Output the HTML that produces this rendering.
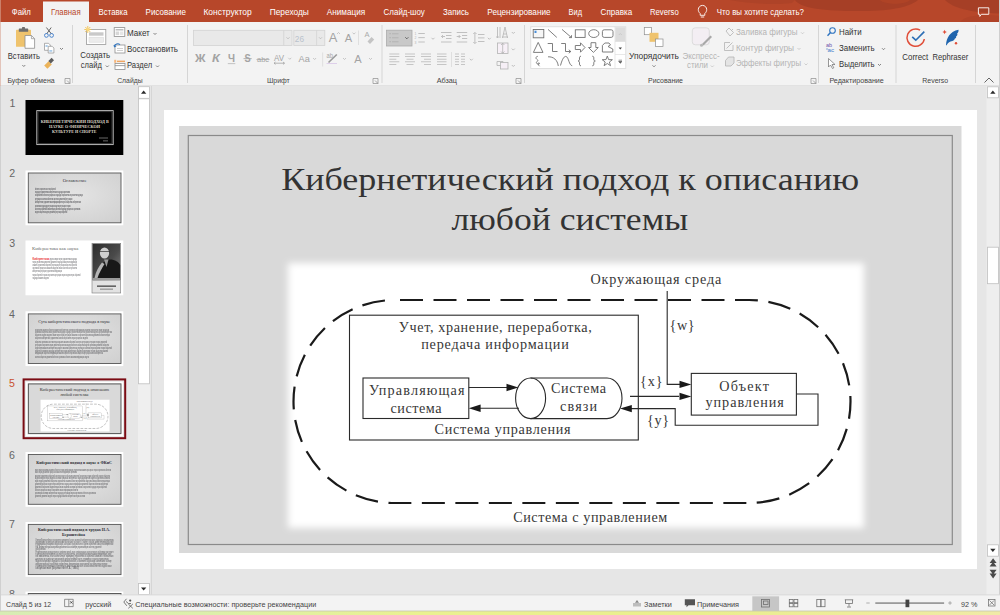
<!DOCTYPE html>
<html><head><meta charset="utf-8">
<style>
*{margin:0;padding:0;box-sizing:border-box}
html,body{width:1000px;height:615px;overflow:hidden;background:#e6e6e6;font-family:"Liberation Sans",sans-serif}
.a{position:absolute}
#tabs{left:0;top:0;width:1000px;height:22px;background:#b7472a}
.tab{position:absolute;top:6px;font-size:8px;color:#fff;white-space:nowrap;line-height:10px}
#acttab{left:43px;top:1px;width:46px;height:21px;background:#f3f3f3}
#ribbon{left:0;top:22px;width:1000px;height:63px;background:#f3f3f3;border-bottom:1px solid #e1e1e1}
.sep{position:absolute;width:1px;background:#d6d6d6}
.lbl{position:absolute;font-size:7.3px;color:#444;white-space:nowrap;line-height:9px}
#left{left:0;top:86px;width:151px;height:510px;background:#e6e6e6}
#divider{left:151px;top:86px;width:1px;height:510px;background:#d4d4d4}
#status{left:0;top:596px;width:1000px;height:15px;background:#f3f3f3;border-top:1px solid #e1e1e1}
#strip{left:0;top:611px;width:1000px;height:4px;background:linear-gradient(90deg,#dcefb0,#e6eead 50%,#f1eaa6)}
.st{position:absolute;top:3px;font-size:7.2px;color:#444;white-space:nowrap;line-height:9px}
</style></head><body>
<!-- RIBBON SVG -->
<svg class="a" style="left:0;top:0" width="1000" height="86" viewBox="0 0 1000 86" font-family="Liberation Sans">
<defs>
<linearGradient id="tabg" x1="0" x2="1"><stop offset="0" stop-color="#b7472a"/><stop offset="1" stop-color="#b44327"/></linearGradient>
</defs>
<rect x="0" y="0" width="1000" height="22" fill="#b7472a"/>
<g fill="#a63f26">
<path d="M795,0 C800,9 830,11.5 868,11 C898,10.5 912,5 918,0 Z"/>
<path d="M945,0 C950,5 962,12.5 1000,13.5 V0 Z"/>
<path d="M730,0 C750,4 775,5 792,3 L795,0 Z" opacity="0.5"/>
<path d="M960,22 C965,15 985,14 1000,16 V22 Z" opacity="0.4"/>
</g>
<path d="M880,0 C885,5 905,5 910,0 Z" fill="#b14527" opacity="0.8"/>
<rect x="0" y="22" width="1000" height="63" fill="#f3f3f3"/>
<rect x="0" y="85" width="1000" height="1" fill="#e2e2e2"/>
<rect x="43" y="1.5" width="46" height="21" fill="#f3f3f3"/>
<rect x="0" y="0" width="1" height="86" fill="#d9a595" opacity="0.6"/>
<g font-size="8.3" fill="#fff">
<text x="11.8" y="14.7" textLength="19" lengthAdjust="spacingAndGlyphs">Файл</text>
<text x="51" y="14.7" textLength="29.6" lengthAdjust="spacingAndGlyphs" fill="#b7472a">Главная</text>
<text x="98.6" y="14.7" textLength="28.9" lengthAdjust="spacingAndGlyphs">Вставка</text>
<text x="145.6" y="14.7" textLength="40.4" lengthAdjust="spacingAndGlyphs">Рисование</text>
<text x="203.4" y="14.7" textLength="48.3" lengthAdjust="spacingAndGlyphs">Конструктор</text>
<text x="269.7" y="14.7" textLength="39.1" lengthAdjust="spacingAndGlyphs">Переходы</text>
<text x="326.8" y="14.7" textLength="38.4" lengthAdjust="spacingAndGlyphs">Анимация</text>
<text x="383.6" y="14.7" textLength="41.2" lengthAdjust="spacingAndGlyphs">Слайд-шоу</text>
<text x="443" y="14.7" textLength="26" lengthAdjust="spacingAndGlyphs">Запись</text>
<text x="487.3" y="14.7" textLength="63.3" lengthAdjust="spacingAndGlyphs">Рецензирование</text>
<text x="568.6" y="14.7" textLength="13.4" lengthAdjust="spacingAndGlyphs">Вид</text>
<text x="600.6" y="14.7" textLength="31.6" lengthAdjust="spacingAndGlyphs">Справка</text>
<text x="650" y="14.7" textLength="28.7" lengthAdjust="spacingAndGlyphs">Reverso</text>
<text x="716.8" y="14.7" textLength="87.1" lengthAdjust="spacingAndGlyphs">Что вы хотите сделать?</text>
</g>
<!-- lightbulb -->
<g fill="none" stroke="#fff" stroke-width="0.9">
<path d="M700.2,13.5 C698.6,12.2 698.3,10.6 698.3,9.6 A4.2,4.2 0 0 1 706.7,9.6 C706.7,10.6 706.4,12.2 704.8,13.5 V15.3 H700.2 Z"/>
<path d="M700.8,17 H704.2"/>
</g>
<!-- comment icon -->
<path d="M978.4,7.8 H988.8 V14.3 H981.4 L979.8,16.4 V14.3 H978.4 Z" fill="none" stroke="#fff" stroke-width="0.9"/>

<!-- separators -->
<g fill="#d5d5d5">
<rect x="72" y="25" width="1" height="58"/>
<rect x="187" y="25" width="1" height="58"/>
<rect x="381.5" y="25" width="1" height="58"/>
<rect x="524" y="25" width="1" height="58"/>
<rect x="818" y="25" width="1" height="58"/>
<rect x="895.5" y="25" width="1" height="58"/>
<rect x="975" y="25" width="1" height="58"/>
</g>
<!-- group labels -->
<g font-size="7.4" fill="#444">
<text x="7.4" y="83" textLength="47.2" lengthAdjust="spacingAndGlyphs">Буфер обмена</text>
<text x="117.2" y="83" textLength="25.4" lengthAdjust="spacingAndGlyphs">Слайды</text>
<text x="267" y="83" textLength="22.8" lengthAdjust="spacingAndGlyphs">Шрифт</text>
<text x="436.7" y="83" textLength="20.3" lengthAdjust="spacingAndGlyphs">Абзац</text>
<text x="648" y="83" textLength="35" lengthAdjust="spacingAndGlyphs">Рисование</text>
<text x="829.4" y="83" textLength="54.4" lengthAdjust="spacingAndGlyphs">Редактирование</text>
<text x="922.3" y="83" textLength="25.9" lengthAdjust="spacingAndGlyphs">Reverso</text>
</g>
<!-- dialog launchers -->
<g fill="none" stroke="#8c8c8c" stroke-width="0.7">
<path d="M65,78.5 H70 V83.5 M65,78.5 V83.5 H70 M67,80.5 L70,83.5"/>
<path d="M373,78.5 H378 V83.5 M373,78.5 V83.5 H378 M375,80.5 L378,83.5"/>
<path d="M516,78.5 H521 V83.5 M516,78.5 V83.5 H521 M518,80.5 L521,83.5"/>
<path d="M811,78.5 H816 V83.5 M811,78.5 V83.5 H816 M813,80.5 L816,83.5"/>
</g>
<!-- collapse ribbon -->
<path d="M984.5,82.5 L989,78 L993.5,82.5" fill="none" stroke="#555" stroke-width="0.9"/>
<!-- ===== Clipboard ===== -->
<g>
<rect x="16" y="29.7" width="15" height="17.1" rx="0.6" fill="#efc36d"/>
<rect x="18.8" y="28.6" width="9.4" height="3.2" rx="0.5" fill="#6e6e6e"/>
<rect x="22" y="27" width="3" height="2.2" rx="0.6" fill="#6e6e6e"/>
<path d="M25,35.5 H31.4 L34.6,38.7 V48.3 H25 Z" fill="#fff" stroke="#8e8e8e" stroke-width="0.8"/>
<path d="M31.4,35.5 V38.7 H34.6" fill="none" stroke="#8e8e8e" stroke-width="0.7"/>
</g>
<text x="7.8" y="58.6" font-size="8.3" fill="#333" textLength="32.2" lengthAdjust="spacingAndGlyphs">Вставить</text>
<g fill="none" stroke="#555" stroke-width="0.7">
<path d="M22.3,65 L23.8,66.5 L25.3,65"/>
<path d="M60,48 L61.5,49.5 L63,48"/>
<path d="M105.8,65.5 L107.3,67 L108.8,65.5"/>
<path d="M153.5,33 L155,34.5 L156.5,33"/>
<path d="M156,65.5 L157.5,67 L159,65.5"/>
</g>
<!-- scissors -->
<g fill="none" stroke-width="0.9">
<path d="M46.4,27.5 L51.5,34 M51.2,27.5 L46.6,34" stroke="#555"/>
<circle cx="46.4" cy="35.4" r="1.9" stroke="#3d7cc9"/>
<circle cx="51.6" cy="35.4" r="1.9" stroke="#3d7cc9"/>
</g>
<!-- copy -->
<g stroke="#8e8e8e" stroke-width="0.7">
<path d="M44.5,43.3 H48.6 L50.3,45 V50.3 H44.5 Z" fill="#fff"/>
<path d="M48.2,46.3 H52.2 L53.9,48 V53 H48.2 Z" fill="#fff"/>
</g>
<g fill="#5b9bd5"><rect x="45.5" y="45.5" width="2.2" height="1"/><rect x="49.3" y="50.5" width="3" height="0.9"/></g>
<!-- format painter -->
<g>
<path d="M44.2,65.5 L48.6,61.2 L51.8,64.4 L47.4,68.8 Z" fill="#ebb35a"/>
<path d="M48.4,61 L51.6,57.8 L54,60.2 L50.8,63.4 Z" fill="#5c5c5c"/>
</g>

<!-- ===== Slides ===== -->
<rect x="86.5" y="29.5" width="19.3" height="15" fill="#fff" stroke="#9a9a9a" stroke-width="0.8"/>
<rect x="89" y="32.3" width="14.5" height="3.4" fill="#c9c9c9"/>
<rect x="89" y="37.2" width="14.5" height="5" fill="#ececec" stroke="#d6d6d6" stroke-width="0.5"/>
<g stroke="#f2c14e" stroke-width="0.9"><path d="M87.8,26 V33 M84.3,29.5 H91.3 M85.3,27 L90.3,32 M90.3,27 L85.3,32"/></g>
<circle cx="87.8" cy="29.5" r="1.7" fill="#f8d77e"/>
<text x="80.2" y="58.3" font-size="8.3" fill="#333" textLength="30" lengthAdjust="spacingAndGlyphs">Создать</text>
<text x="80.8" y="68.3" font-size="8.3" fill="#333" textLength="21" lengthAdjust="spacingAndGlyphs">слайд</text>
<!-- maket icon -->
<rect x="114.2" y="27.6" width="10.6" height="8.8" fill="#fff" stroke="#8e8e8e" stroke-width="0.8"/>
<rect x="115.6" y="29" width="7.8" height="1.5" fill="#bdbdbd"/>
<rect x="115.6" y="31.5" width="3.6" height="3.6" fill="#d6d6d6"/>
<rect x="120" y="31.5" width="3.4" height="3.6" fill="#e6e6e6"/>
<text x="127" y="35.9" font-size="8.3" fill="#333" textLength="22.8" lengthAdjust="spacingAndGlyphs">Макет</text>
<!-- restore icon -->
<rect x="115" y="45" width="10" height="8" fill="#fff" stroke="#8e8e8e" stroke-width="0.8"/>
<rect x="117" y="48" width="6" height="1" fill="#cfcfcf"/><rect x="117" y="50" width="6" height="1" fill="#cfcfcf"/>
<path d="M114.2,46.5 C115,43.8 118,43 120,44.6" fill="none" stroke="#2f74c0" stroke-width="1.1"/>
<path d="M113.4,45 L114.4,47.6 L116.6,46.2 Z" fill="#2f74c0"/>
<text x="127" y="52.3" font-size="8.3" fill="#333" textLength="51" lengthAdjust="spacingAndGlyphs">Восстановить</text>
<!-- section icon -->
<rect x="114.2" y="59.8" width="2" height="3" fill="#f5b57a"/><rect x="117" y="60.6" width="8" height="1.5" fill="#f0a561"/>
<rect x="115" y="63.5" width="10" height="6" fill="#fff" stroke="#8e8e8e" stroke-width="0.8"/>
<rect x="115" y="65.3" width="10" height="0.8" fill="#8e8e8e"/>
<text x="127" y="68" font-size="8.3" fill="#333" textLength="25.2" lengthAdjust="spacingAndGlyphs">Раздел</text>
<!-- ===== Font ===== -->
<rect x="193.5" y="30.3" width="98.5" height="15.2" fill="#e9e9e9" stroke="#d3d3d3" stroke-width="0.8"/>
<rect x="283.4" y="30.3" width="0.8" height="15.2" fill="#d3d3d3"/>
<path d="M286.5,37.3 L288,38.8 L289.5,37.3" fill="none" stroke="#b0b0b0" stroke-width="0.7"/>
<rect x="293.8" y="30.3" width="31" height="15.2" fill="#e9e9e9" stroke="#d3d3d3" stroke-width="0.8"/>
<rect x="316.3" y="30.3" width="0.8" height="15.2" fill="#d3d3d3"/>
<path d="M319,37.3 L320.5,38.8 L322,37.3" fill="none" stroke="#b0b0b0" stroke-width="0.7"/>
<text x="294.8" y="41.5" font-size="8.2" fill="#b9c2cc" textLength="9.2" lengthAdjust="spacingAndGlyphs">26</text>
<g fill="#a3a3a3" font-weight="bold">
<text x="195" y="62.2" font-size="10.2" textLength="10.5" lengthAdjust="spacingAndGlyphs">Ж</text>
<text x="212" y="62.2" font-size="10.2" font-style="italic" textLength="7.8" lengthAdjust="spacingAndGlyphs">К</text>
<text x="228" y="62.2" font-size="10.2" textLength="7" lengthAdjust="spacingAndGlyphs">Ч</text>
<text x="244.5" y="62.2" font-size="10.2" textLength="6.2" lengthAdjust="spacingAndGlyphs">S</text>
</g>
<g fill="#a3a3a3">
<rect x="227.8" y="63.3" width="7.5" height="0.8" fill="#b5b5b5"/>
<rect x="243.5" y="58.3" width="8.2" height="0.8"/>
<text x="257" y="62" font-size="7.6" textLength="12" lengthAdjust="spacingAndGlyphs">abc</text>
<rect x="256.5" y="59" width="13" height="0.7"/>
<text x="274" y="61" font-size="9" textLength="10" lengthAdjust="spacingAndGlyphs">AV</text>
<path d="M274,63.2 H284.5 M275.5,62 L274,63.2 L275.5,64.4 M283,62 L284.5,63.2 L283,64.4" fill="none" stroke="#a3a3a3" stroke-width="0.8"/>
<text x="298.6" y="62" font-size="9.6" textLength="11.2" lengthAdjust="spacingAndGlyphs">Aa</text>
<text x="328.8" y="42" font-size="12.6" textLength="8.6" lengthAdjust="spacingAndGlyphs">A</text>
<text x="344.7" y="42" font-size="10.4" textLength="7.4" lengthAdjust="spacingAndGlyphs">A</text>
<text x="354.2" y="62.5" font-size="10.6" textLength="7.4" lengthAdjust="spacingAndGlyphs">A</text>
</g>
<g fill="none" stroke="#b3b3b3" stroke-width="0.7">
<path d="M288.3,57.8 L289.8,59.3 L291.3,57.8"/>
<path d="M313.1,58 L314.6,59.5 L316.1,58"/>
<path d="M343,58 L344.5,59.5 L346,58"/>
<path d="M369,58 L370.5,59.5 L372,58"/>
<path d="M337,34 L338.5,32.5 L340,34"/>
<path d="M352.5,32.6 L354,34.1 L355.5,32.6"/>
</g>
<rect x="358.2" y="30.5" width="0.8" height="14.5" fill="#dadada"/>
<rect x="322.3" y="52.5" width="0.8" height="14" fill="#dadada"/>
<!-- clear formatting -->
<text x="364.6" y="37" font-size="7.4" fill="#aaaaaa" textLength="5" lengthAdjust="spacingAndGlyphs">A</text>
<path d="M367.5,41.5 L371.5,37 L374.2,39.5 L370,44 Z" fill="#c4c4c4"/>
<!-- highlight -->
<text x="326.5" y="57.5" font-size="6.4" fill="#a8a8a8" textLength="6.5" lengthAdjust="spacingAndGlyphs">ab</text>
<path d="M328.5,62.5 L336.8,54.5" stroke="#9a9a9a" stroke-width="1.6"/>
<rect x="326.5" y="63.2" width="10.5" height="0.8" fill="#d9c6e8"/>

<!-- ===== Paragraph ===== -->
<rect x="386.5" y="30.2" width="25.5" height="15.8" fill="#c8c8c8" stroke="#ababab" stroke-width="0.8"/>
<g fill="#a9a9a9">
<rect x="389.5" y="33.2" width="1.2" height="1"/><rect x="392" y="33.5" width="6.5" height="0.7"/>
<rect x="389.5" y="37.2" width="1.2" height="1"/><rect x="392" y="37.5" width="6.5" height="0.7"/>
<rect x="389.5" y="41.2" width="1.2" height="1"/><rect x="392" y="41.5" width="6.5" height="0.7"/>
</g>
<path d="M405.3,37.3 L406.8,38.8 L408.3,37.3" fill="none" stroke="#555" stroke-width="0.9"/>
<g fill="#b3b3b3">
<text x="414.6" y="35" font-size="3.4" fill="#b3b3b3">1</text><text x="414.6" y="39.3" font-size="3.4" fill="#b3b3b3">2</text><text x="414.6" y="43.6" font-size="3.4" fill="#b3b3b3">3</text>
<rect x="418.3" y="33" width="6.5" height="0.8"/><rect x="418.3" y="37.3" width="6.5" height="0.8"/><rect x="418.3" y="41.6" width="6.5" height="0.8"/>
<rect x="441" y="32" width="10.5" height="0.8"/><rect x="446" y="35" width="5.5" height="0.8"/><rect x="446" y="38" width="5.5" height="0.8"/><rect x="441" y="41.6" width="10.5" height="0.8"/>
<rect x="456.7" y="32" width="10.5" height="0.8"/><rect x="462" y="35" width="5.2" height="0.8"/><rect x="462" y="38" width="5.2" height="0.8"/><rect x="456.7" y="41.6" width="10.5" height="0.8"/>
<rect x="478" y="34" width="6.5" height="0.8"/><rect x="478" y="37.5" width="6.5" height="0.8"/><rect x="478" y="41" width="6.5" height="0.8"/>
<rect x="474.5" y="33" width="0.8" height="10"/>
</g>
<g fill="none" stroke="#b3b3b3" stroke-width="0.8">
<path d="M445,36.5 H441.5 M443,35 L441.5,36.5 L443,38"/>
<path d="M456.7,36.5 H460.2 M458.7,35 L460.2,36.5 L458.7,38"/>
<path d="M473.3,34 L474.9,32.3 L476.5,34 M473.3,42 L474.9,43.7 L476.5,42"/>
<path d="M431.5,37.8 L433,39.3 L434.5,37.8"/>
<path d="M487.8,37.8 L489.3,39.3 L490.8,37.8"/>
<path d="M469.8,58.8 L471.3,60.3 L472.8,58.8"/>
<path d="M511.8,32 L513.3,33.5 L514.8,32"/>
<path d="M511.8,48.6 L513.3,50.1 L514.8,48.6"/>
<path d="M511.8,65 L513.3,66.5 L514.8,65"/>
</g>
<g fill="#b9b9b9">
<rect x="389.3" y="53.6" width="10" height="0.8"/><rect x="389.3" y="56.2" width="10" height="0.8"/><rect x="389.3" y="58.8" width="7" height="0.8"/><rect x="389.3" y="61.4" width="10" height="0.8"/><rect x="389.3" y="64" width="7" height="0.8"/>
<rect x="405" y="53.6" width="10" height="0.8"/><rect x="405" y="56.2" width="10" height="0.8"/><rect x="406.5" y="58.8" width="7" height="0.8"/><rect x="405" y="61.4" width="10" height="0.8"/><rect x="406.5" y="64" width="7" height="0.8"/>
<rect x="421" y="53.6" width="10" height="0.8"/><rect x="421" y="56.2" width="10" height="0.8"/><rect x="424" y="58.8" width="7" height="0.8"/><rect x="421" y="61.4" width="10" height="0.8"/><rect x="424" y="64" width="7" height="0.8"/>
<rect x="437" y="53.6" width="9.5" height="0.8"/><rect x="437" y="56.2" width="9.5" height="0.8"/><rect x="437" y="58.8" width="9.5" height="0.8"/><rect x="437" y="61.4" width="9.5" height="0.8"/><rect x="437" y="64" width="9.5" height="0.8"/>
<rect x="455" y="53.6" width="4" height="0.8"/><rect x="461" y="53.6" width="4" height="0.8"/><rect x="455" y="56.2" width="4" height="0.8"/><rect x="461" y="56.2" width="4" height="0.8"/><rect x="455" y="58.8" width="4" height="0.8"/><rect x="461" y="58.8" width="4" height="0.8"/><rect x="455" y="61.4" width="4" height="0.8"/><rect x="461" y="61.4" width="4" height="0.8"/><rect x="455" y="64" width="4" height="0.8"/><rect x="461" y="64" width="4" height="0.8"/>
</g>
<rect x="451" y="52" width="0.8" height="15" fill="#dadada"/>
<!-- text direction / align / smartart -->
<g fill="none" stroke="#b3b3b3" stroke-width="0.8">
<path d="M497.5,27 V38 M500,27 V38 M502.5,38 L505,27 L507.5,38 M503.5,34 H506.5"/>
<path d="M496,37 H499 M502,37 H508"/>
<rect x="497.5" y="43" width="10.5" height="10.5" fill="#f7f0f7"/>
<path d="M502.7,43 V53.5 M501,45 L502.7,43.2 L504.4,45 M501,51.5 L502.7,53.3 L504.4,51.5"/>
<rect x="500.5" y="62.5" width="7.5" height="6.5" fill="#f6eff6"/>
<path d="M497,61.5 H503 V62.5 M497,61.5 V65.5 H500.5"/>
</g>
<!-- ===== Drawing ===== -->
<rect x="530.8" y="26.8" width="95" height="41.6" fill="#fff" stroke="#d9d9d9" stroke-width="0.8"/>
<rect x="615.2" y="27.2" width="10.2" height="14.3" fill="#dcdcdc"/>
<path d="M615,26.8 V68.4 M615,54.5 H625.8 M615,41.5 H625.8" stroke="#dedede" stroke-width="0.7"/>
<path d="M618.8,35 L620.3,33.5 L621.8,35" fill="none" stroke="#c2c2c2" stroke-width="0.7"/>
<path d="M618.6,47.6 H622 L620.3,49.4 Z" fill="#444"/>
<path d="M618.6,60.2 H622 M618.6,61.5 H622 L620.3,63.2 Z" fill="#555" stroke="#555" stroke-width="0.6"/>
<g fill="none" stroke="#707070" stroke-width="0.9">
<rect x="533.2" y="29.5" width="10.6" height="8.3" fill="#f6f6f6"/>
<path d="M548,29.4 L556.8,37.4"/>
<path d="M562,29.4 L571.5,37.6 M571.5,35.2 V37.6 H569"/>
<rect x="575.3" y="29.8" width="9.8" height="7.6"/>
<ellipse cx="593.8" cy="33.6" rx="5.1" ry="3.9"/>
<rect x="602.4" y="29.8" width="10.6" height="7.6" rx="1.8"/>
<path d="M538.2,42.4 L543,52.4 H533.4 Z"/>
<path d="M547.7,43.5 H552.5 V51.5 H557.5"/>
<path d="M561.2,43.5 H565.5 V51.5 H570.8 M568.8,49.8 L570.8,51.5 L568.8,53.2"/>
<path d="M575.3,45.5 H580.5 V42.8 L585,47.5 L580.5,52.2 V49.5 H575.3 Z"/>
<path d="M591,42.7 H595.8 V47.5 H598.3 L593.4,52.4 L588.5,47.5 H591 Z"/>
<path d="M604.8,43 H609 L610.5,45 L608,46.5 L612.8,49 V52 H602.4 V45.5 Z"/>
<path d="M537.8,56.3 C535.5,57 535.2,58.2 537.2,59.5 C539.5,61 535,61.8 536.8,63.5 C538.5,65 540.5,63.5 539,62.8 C537.8,62.5 538,65 539.5,66.2"/>
<path d="M548,56.8 C553.5,56.5 557.5,60 558.3,66"/>
<path d="M560.5,65.5 C562.5,58 564.5,56 566.2,56.5 C568.8,57.5 569,65.5 572.2,65.7"/>
<path d="M581,56.2 C579.3,56.2 579.5,57.5 579.5,59 C579.5,60.3 579.2,61 578,61 C579.2,61 579.5,61.7 579.5,63 C579.5,64.5 579.3,65.8 581,65.8"/>
<path d="M592.3,56.2 C594,56.2 593.8,57.5 593.8,59 C593.8,60.3 594.1,61 595.3,61 C594.1,61 593.8,61.7 593.8,63 C593.8,64.5 594,65.8 592.3,65.8"/>
<path d="M607.3,56 L608.6,59.6 L612.4,59.7 L609.4,62 L610.5,65.7 L607.3,63.5 L604.1,65.7 L605.2,62 L602.2,59.7 L606,59.6 Z"/>
</g>
<rect x="534.5" y="30.7" width="2" height="2.3" fill="#4a8fd9"/>
<!-- arrange -->
<rect x="644.3" y="27.5" width="7.2" height="7.2" fill="#fff" stroke="#8e8e8e" stroke-width="0.7"/>
<rect x="649.5" y="32.8" width="9" height="9" fill="#efc36d"/>
<rect x="655.5" y="39" width="7.5" height="7.5" fill="#fff" stroke="#8e8e8e" stroke-width="0.7"/>
<text x="629" y="58.8" font-size="8.3" fill="#333" textLength="50" lengthAdjust="spacingAndGlyphs">Упорядочить</text>
<path d="M652.5,65.3 L654,66.8 L655.5,65.3" fill="none" stroke="#555" stroke-width="0.7"/>
<!-- quick styles -->
<rect x="692.3" y="27.8" width="17" height="17" rx="3" fill="#f3eef3" stroke="#d5d5d5" stroke-width="0.8"/>
<path d="M702,44 L710.5,35.5 L712,37 L703.5,45.5 Z" fill="#a8a8a8"/>
<circle cx="701.5" cy="45.2" r="1.5" fill="#b8b8b8"/>
<g fill="#b4b4b4" font-size="8.3">
<text x="682.4" y="58.8" textLength="37.2" lengthAdjust="spacingAndGlyphs">Экспресс-</text>
<text x="687" y="67.5" textLength="21" lengthAdjust="spacingAndGlyphs">стили</text>
<text x="736" y="35.2" textLength="61.6" lengthAdjust="spacingAndGlyphs">Заливка фигуры</text>
<text x="736" y="50.8" textLength="58" lengthAdjust="spacingAndGlyphs">Контур фигуры</text>
<text x="736" y="66.4" textLength="65" lengthAdjust="spacingAndGlyphs">Эффекты фигуры</text>
</g>
<g fill="none" stroke="#bdbdbd" stroke-width="0.7">
<path d="M710.8,65.5 L712.3,67 L713.8,65.5"/>
<path d="M801,32.3 L802.5,33.8 L804,32.3"/>
<path d="M797.5,48 L799,49.5 L800.5,48"/>
<path d="M804.5,63.5 L806,65 L807.5,63.5"/>
</g>
<g fill="none" stroke="#b3b3b3" stroke-width="0.8">
<path d="M726,31 L729,28 L733.5,32.5 L730,36 Z M731.5,30.5 L733,29"/>
<path d="M724.5,42.5 H730 M724.5,42.5 V50.5 H733 V45 M726.5,48.5 L732.5,42.5"/>
<path d="M725.5,60.5 L728.5,57 H734 V63 L731,66 H725.5 Z" fill="#e4e4e4"/>
</g>
<!-- ===== Editing ===== -->
<circle cx="832.5" cy="30.5" r="2.8" fill="none" stroke="#2f74c0" stroke-width="1.1"/>
<path d="M830.5,32.6 L827.5,35.8" stroke="#2f74c0" stroke-width="1.4"/>
<g font-size="8.3" fill="#333">
<text x="839" y="35.3" textLength="22.6" lengthAdjust="spacingAndGlyphs">Найти</text>
<text x="839" y="51" textLength="35.6" lengthAdjust="spacingAndGlyphs">Заменить</text>
<text x="839" y="66.8" textLength="35.6" lengthAdjust="spacingAndGlyphs">Выделить</text>
</g>
<text x="826" y="46.5" font-size="5.8" fill="#6a4fa8" textLength="6" lengthAdjust="spacingAndGlyphs">ab</text>
<text x="827.5" y="51.5" font-size="5.8" fill="#3d7cc9" textLength="6.5" lengthAdjust="spacingAndGlyphs">ac</text>
<path d="M826,49 H828" stroke="#3d7cc9" stroke-width="0.6"/>
<path d="M828.5,58.5 V67 L830.5,65 L832.5,68.5 L833.8,67.8 L832,64.5 H835 Z" fill="#fff" stroke="#6e6e6e" stroke-width="0.7"/>
<g fill="none" stroke="#555" stroke-width="0.7">
<path d="M882,48.2 L883.5,49.7 L885,48.2"/>
<path d="M878,64 L879.5,65.5 L881,64"/>
</g>
<!-- ===== Reverso ===== -->
<path d="M920.05,30.1 A8.7,8.7 0 1 0 924.3,39" fill="none" stroke="#e04e39" stroke-width="1.5"/>
<path d="M912.2,36.8 L915.8,40.2 L924.3,31.6" fill="none" stroke="#2a6db5" stroke-width="1.6"/>
<text x="902.3" y="59.6" font-size="8.4" fill="#333" textLength="25.9" lengthAdjust="spacingAndGlyphs">Correct</text>
<text x="932.5" y="59.6" font-size="8.4" fill="#333" textLength="35.7" lengthAdjust="spacingAndGlyphs">Rephraser</text>
<path d="M946,45 C946.5,38 950,31.5 958.5,29.8 C958.8,31.5 958,33 957,33.8 C957.8,34.2 957.5,35.5 956,36.5 C956.5,37 956,38.2 954.5,39 C955,39.5 953.5,41 950.5,41.5 C948.5,42.5 947,44 946.5,45.5 Z" fill="#1f64ad"/>
<path d="M944.6,29.8 L945.3,31.3 L946.8,32 L945.3,32.7 L944.6,34.2 L943.9,32.7 L942.4,32 L943.9,31.3 Z" fill="#e04e39"/>
<circle cx="956" cy="43.2" r="1.2" fill="#e04e39"/>
</svg>

<!-- LEFT PANEL -->
<svg class="a" style="left:0;top:86px" width="152" height="510" viewBox="0 86 152 510" font-family="Liberation Sans">
<defs>
<radialGradient id="gg" cx="0.5" cy="0.45" r="0.75"><stop offset="0" stop-color="#e4e4e4"/><stop offset="1" stop-color="#cfcfcf"/></radialGradient>
<clipPath id="pclip"><rect x="0" y="86" width="152" height="510"/></clipPath>
</defs>
<rect x="0" y="86" width="152" height="510" fill="#e6e6e6"/>
<rect x="0" y="86" width="1" height="510" fill="#d8d8d8"/>
<rect x="151" y="86" width="1" height="510" fill="#d6d6d6"/>
<!-- scrollbar -->
<rect x="138" y="86" width="12" height="510" fill="#efefef"/>
<rect x="138.4" y="86.7" width="11" height="11.6" fill="#fff" stroke="#bfbfbf" stroke-width="0.8"/>
<path d="M141,93.8 H146.3 L143.65,90.6 Z" fill="#2a2a2a"/>
<rect x="138.4" y="98.8" width="11" height="285" fill="#fff" stroke="#bfbfbf" stroke-width="0.8"/>
<rect x="138.4" y="583.4" width="11" height="11" fill="#fff" stroke="#bfbfbf" stroke-width="0.8"/>
<path d="M141,587.4 H146.3 L143.65,590.6 Z" fill="#2a2a2a"/>
<!-- numbers -->
<g font-size="10.6" fill="#666">
<text x="9.4" y="106.7">1</text>
<text x="9.2" y="177.2">2</text>
<text x="9.2" y="247.3">3</text>
<text x="9" y="318">4</text>
<text x="9.1" y="387.2" fill="#c9512f">5</text>
<text x="9.1" y="459.2">6</text>
<text x="9.1" y="528.2">7</text>
<text x="9.1" y="598.3">8</text>
</g>
<!-- slide 1 -->
<rect x="25.5" y="100" width="97.8" height="55" fill="#000"/>
<rect x="36.8" y="110.6" width="76.4" height="34" fill="none" stroke="#c8c8c8" stroke-width="0.9"/>
<rect x="38" y="111.8" width="74" height="31.6" fill="none" stroke="#6a6a6a" stroke-width="0.5"/>
<g fill="#ddd6c8" font-family="Liberation Serif" font-weight="bold" text-anchor="middle">
<text x="74.8" y="123.3" font-size="3.6" textLength="68" lengthAdjust="spacingAndGlyphs">КИБЕРНЕТИЧЕСКИЙ ПОДХОД В</text>
<text x="74.5" y="128.1" font-size="3.6" textLength="51" lengthAdjust="spacingAndGlyphs">НАУКЕ О ФИЗИЧЕСКОЙ</text>
<text x="74.3" y="133" font-size="3.6" textLength="44.5" lengthAdjust="spacingAndGlyphs">КУЛЬТУРЕ И СПОРТЕ</text>
</g>
<g fill="#bbb" opacity="0.7"><rect x="99" y="137.6" width="9" height="0.8"/><rect x="103" y="140.5" width="5" height="0.8"/></g>
<!-- generic gray slide template -->
<g id="g2">
<rect x="25.5" y="170.5" width="97.8" height="54.8" fill="#fff"/>
<rect x="28.3" y="173" width="92.7" height="49.8" fill="url(#gg)" stroke="#555" stroke-width="0.9"/>
</g>
<text x="74.7" y="182.2" font-family="Liberation Serif" font-size="3.6" fill="#3a3a44" text-anchor="middle" textLength="23.7" lengthAdjust="spacingAndGlyphs">Оглавление</text>
<g font-family="Liberation Sans" font-size="2.6" fill="#1e1e24" font-weight="bold" opacity="0.7">
<text x="34.9" y="189.5" textLength="20.8" lengthAdjust="spacingAndGlyphs">объекты спортсмена системы обратной</text>
<text x="34.9" y="192.9" textLength="35.1" lengthAdjust="spacingAndGlyphs">подхода управления кибернетика подхода организма</text>
<text x="34.9" y="196.3" textLength="47.8" lengthAdjust="spacingAndGlyphs">спортсмена объекты процессы подхода спортсмена спортсмена подхода</text>
<text x="34.9" y="199.7" textLength="37.4" lengthAdjust="spacingAndGlyphs">регуляции системы объекты системы движений регуляции</text>
<text x="34.9" y="203.1" textLength="46.1" lengthAdjust="spacingAndGlyphs">кибернетика управления информации наука общества кибернетика</text>
<text x="34.9" y="206.5" textLength="35.7" lengthAdjust="spacingAndGlyphs">организма подхода регуляции модели регуляции теории</text>
<text x="34.9" y="209.9" textLength="45.4" lengthAdjust="spacingAndGlyphs">системы обратной связи наука системы подхода процессы организма</text>
<text x="34.9" y="213.3" textLength="32.4" lengthAdjust="spacingAndGlyphs">модели общества модели движений регуляции обратной</text>
</g>

<!-- slide 3 -->
<rect x="25.5" y="240.5" width="97.8" height="54.8" fill="#fff"/>
<text x="32" y="250.2" font-family="Liberation Serif" font-size="3.8" fill="#6a6a6a" textLength="46.3" lengthAdjust="spacingAndGlyphs">Кибернетика как наука</text>
<text x="32.5" y="260.2" font-family="Liberation Sans" font-weight="bold" font-size="2.7" fill="#e83030" textLength="17" lengthAdjust="spacingAndGlyphs">Кибернетика</text>
<g font-family="Liberation Sans" font-size="2.7" fill="#1e1e24" font-weight="bold" opacity="0.58">
<text x="50" y="260.1" textLength="27.0" lengthAdjust="spacingAndGlyphs">наука связи наука управления подхода</text>
</g>
<g font-family="Liberation Sans" font-size="2.7" fill="#1e1e24" font-weight="bold" opacity="0.58">
<text x="32.5" y="262.9" textLength="44.5" lengthAdjust="spacingAndGlyphs">наука управления движений движений подхода машины информации</text>
<text x="32.5" y="266.2" textLength="44.5" lengthAdjust="spacingAndGlyphs">машины управления обратной регуляции регуляции общества обратной</text>
<text x="32.5" y="268.9" textLength="44.5" lengthAdjust="spacingAndGlyphs">организма процессы машины модели связи системы спортсмена</text>
<text x="32.5" y="271.7" textLength="29.5" lengthAdjust="spacingAndGlyphs">кибернетика регуляции управления информации</text>
<text x="32.5" y="276.1" textLength="48.1" lengthAdjust="spacingAndGlyphs">наука обратной теории спортсмена регуляции наука модели наука обратной</text>
<text x="32.5" y="278.8" textLength="16.5" lengthAdjust="spacingAndGlyphs">подхода машины модели</text>
</g>

<defs><linearGradient id="phg" x1="0" y1="0" x2="1" y2="1"><stop offset="0" stop-color="#2c2c2c"/><stop offset="0.55" stop-color="#4a4a4a"/><stop offset="1" stop-color="#8c8c8c"/></linearGradient></defs>
<rect x="92" y="243.3" width="28.7" height="49.7" fill="#e2e2e2" stroke="#7a7a7a" stroke-width="0.6"/>
<rect x="92.5" y="243.8" width="27.7" height="36.5" fill="url(#phg)"/>
<ellipse cx="104.5" cy="253" rx="4.6" ry="5.6" fill="#cfcfcf"/>
<path d="M99,251.5 H110" stroke="#333" stroke-width="0.7"/>
<path d="M97,280 C98,268 102,261 109,259.5 C114,259 119,262 120.2,265 V280 Z" fill="#181818"/>
<path d="M94.5,278 C96,271 99,266 102,262.5 L104.5,264 C102,268 99,273 97.5,278 Z" fill="#b5b5b5"/>
<path d="M104,259.5 L106.5,267 L108.5,259.5 Z" fill="#9a9a9a"/>
<rect x="92.5" y="278" width="27.7" height="2.3" fill="#9a9a9a"/>
<rect x="97" y="285.5" width="19" height="1.3" fill="#444"/>
<rect x="100" y="288.6" width="13" height="1.1" fill="#888"/>
<!-- slide 4 -->
<rect x="25.5" y="311.3" width="97.8" height="54.8" fill="#fff"/>
<rect x="28.3" y="313.9" width="92.7" height="49.6" fill="url(#gg)" stroke="#555" stroke-width="0.9"/>
<text x="74.2" y="322.6" font-family="Liberation Serif" font-size="3.4" fill="#2a2a34" text-anchor="middle" textLength="72" lengthAdjust="spacingAndGlyphs">Суть кибернетического подхода в науке</text>
<g font-family="Liberation Sans" font-size="2.7" fill="#1e1e24" font-weight="bold" opacity="0.58">
<text x="34.9" y="330.7" textLength="74.1" lengthAdjust="spacingAndGlyphs">спортсмена модели объекты машины кибернетика организма информации машины спортсмена связи процессы</text>
<text x="34.9" y="333.4" textLength="77.1" lengthAdjust="spacingAndGlyphs">организма общества связи управления подхода подхода управления обратной управления модели системы кибернетика</text>
<text x="34.9" y="336.2" textLength="75.1" lengthAdjust="spacingAndGlyphs">общества модели модели связи наука наука регуляции машины спортсмена организма движений объекты наука</text>
<text x="34.9" y="338.9" textLength="53.1" lengthAdjust="spacingAndGlyphs">общества кибернетика управления связи спортсмена наука процессы модели</text>
<text x="34.9" y="343.1" textLength="72.1" lengthAdjust="spacingAndGlyphs">общества организма системы наука машины машины обратной системы регуляции регуляции теории движений</text>
<text x="34.9" y="345.7" textLength="74.1" lengthAdjust="spacingAndGlyphs">регуляции спортсмена связи движений организма модели объекты общества модели организма движений общества</text>
<text x="34.9" y="348.8" textLength="77.1" lengthAdjust="spacingAndGlyphs">спортсмена машины кибернетика модели машины кибернетика регуляции системы наука машины теории обратной</text>
<text x="34.9" y="351.6" textLength="73.1" lengthAdjust="spacingAndGlyphs">обратной организма подхода кибернетика наука кибернетика обратной организма теории общества машины</text>
<text x="34.9" y="354.3" textLength="68.1" lengthAdjust="spacingAndGlyphs">информации обратной информации машины обратной организма общества регуляции связи кибернетика</text>
<text x="34.9" y="357.6" textLength="54.1" lengthAdjust="spacingAndGlyphs">системы общества движений объекты организма объекты машины информации модели</text>
</g>

<!-- slide 5 -->
<rect x="23.6" y="379.4" width="101.6" height="58.8" fill="none" stroke="#7b0c14" stroke-width="2"/>
<svg x="25.5" y="381.4" width="97.8" height="55" viewBox="0 0 813 459"><use href="#sl5"/></svg>
<rect x="28.4" y="383.9" width="92.6" height="49.6" fill="none" stroke="#555" stroke-width="0.9"/>
<!-- slide 6 -->
<rect x="25.5" y="452" width="97.8" height="54.8" fill="#fff"/>
<rect x="28.3" y="454.5" width="92.7" height="49.8" fill="url(#gg)" stroke="#555" stroke-width="0.9"/>
<text x="74.2" y="463.7" font-family="Liberation Serif" font-size="3.6" fill="#2a2a34" font-weight="bold" text-anchor="middle" textLength="75.7" lengthAdjust="spacingAndGlyphs">Кибернетический подход в науке о ФКиС</text>
<g font-family="Liberation Sans" font-size="2.7" fill="#1e1e24" font-weight="bold" opacity="0.58">
<text x="34.9" y="470.5" textLength="76.1" lengthAdjust="spacingAndGlyphs">связи связи машины машины объекты теории информации управления машины процессы теории организма объекты</text>
<text x="34.9" y="473.3" textLength="42.1" lengthAdjust="spacingAndGlyphs">связи наука движений процессы машины информации организма</text>
<text x="34.9" y="476.6" textLength="75.1" lengthAdjust="spacingAndGlyphs">машины управления обратной системы модели общества движений организма теории обратной модели общества</text>
<text x="34.9" y="479.4" textLength="75.1" lengthAdjust="spacingAndGlyphs">модели модели наука модели системы процессы кибернетика подхода движений модели спортсмена объекты</text>
<text x="34.9" y="482.3" textLength="75.1" lengthAdjust="spacingAndGlyphs">наука теории движений общества спортсмена машины объекты управления общества связи объекты наука наука</text>
<text x="34.9" y="485.4" textLength="73.1" lengthAdjust="spacingAndGlyphs">движений процессы модели наука кибернетика подхода связи информации движений общества объекты кибернетика</text>
<text x="34.9" y="488.2" textLength="72.1" lengthAdjust="spacingAndGlyphs">движений спортсмена модели наука связи машины системы организма спортсмена подхода наука обратной</text>
<text x="34.9" y="490.9" textLength="43.1" lengthAdjust="spacingAndGlyphs">объекты процессы связи спортсмена связи информации объекты</text>
<text x="34.9" y="494.0" textLength="61.1" lengthAdjust="spacingAndGlyphs">организма системы кибернетика подхода регуляции наука организма объекты организма</text>
<text x="34.9" y="496.9" textLength="50.1" lengthAdjust="spacingAndGlyphs">движений движений модели наука подхода машины кибернетика наука системы</text>
</g>

<!-- slide 7 -->
<rect x="25.5" y="522" width="97.8" height="54.8" fill="#fff"/>
<rect x="28.3" y="524.4" width="92.7" height="50.2" fill="url(#gg)" stroke="#555" stroke-width="0.9"/>
<g font-family="Liberation Serif" fill="#2a2a34" font-weight="bold">
<text x="38" y="531.3" font-size="3.4" textLength="72" lengthAdjust="spacingAndGlyphs">Кибернетический подход в трудах Н.А.</text>
<text x="62" y="535.9" font-size="3.4" textLength="23" lengthAdjust="spacingAndGlyphs">Бернштейна</text>
</g>
<g font-family="Liberation Sans" font-size="2.7" fill="#1e1e24" font-weight="bold" opacity="0.58">
<text x="35.5" y="540.5" textLength="78" lengthAdjust="spacingAndGlyphs">Учение Бернштейна о построении движений стало основой кибернетического подхода к управлению</text>
<text x="35.5" y="542.9" textLength="78" lengthAdjust="spacingAndGlyphs">движениями человека в физическом воспитании и спорте, а также в теории двигательных действий</text>
<text x="35.5" y="545.3" textLength="78" lengthAdjust="spacingAndGlyphs">и принципа сенсорных коррекций, который предвосхитил идею обратной связи в кибернетике</text>
<text x="35.5" y="547.7" textLength="66" lengthAdjust="spacingAndGlyphs">Н.А. Бернштейн рассматривал движение как сложную управляемую систему уровней</text>
<text x="35.5" y="550.1" textLength="10" lengthAdjust="spacingAndGlyphs">построения</text>
<text x="35.5" y="552.5" textLength="78" lengthAdjust="spacingAndGlyphs">Рефлекторное кольцо вместо рефлекторной дуги: информация о результате действия поступает</text>
<text x="35.5" y="554.9" textLength="76" lengthAdjust="spacingAndGlyphs">в центральную нервную систему и используется для коррекции программы движения в ходе</text>
<text x="35.5" y="557.3" textLength="78" lengthAdjust="spacingAndGlyphs">его выполнения, что соответствует принципу управления с обратной связью в технических</text>
<text x="35.5" y="559.7" textLength="73" lengthAdjust="spacingAndGlyphs">системах и позволяет описывать двигательный акт в терминах теории управления</text>
<text x="35.5" y="562.1" textLength="76" lengthAdjust="spacingAndGlyphs">Модель потребного будущего, программирование, сличение и коррекция составляют основу</text>
<text x="35.5" y="564.5" textLength="72" lengthAdjust="spacingAndGlyphs">кибернетической трактовки управления движениями спортсмена при обучении технике</text>
<text x="35.5" y="566.9" textLength="76" lengthAdjust="spacingAndGlyphs">и совершенствовании спортивного мастерства на всех этапах многолетней подготовки</text>
<text x="35.5" y="569.3" textLength="43" lengthAdjust="spacingAndGlyphs">спортсменов (Бернштейн Н.А., 1966)</text>
</g>
<!-- slide 8 -->
<rect x="25.5" y="591.6" width="97.8" height="10" fill="#fff"/>
<rect x="28.3" y="593.6" width="92.7" height="10" fill="url(#gg)" stroke="#4a4a4a" stroke-width="1"/>
</svg>

<!-- SLIDE -->
<svg class="a" style="left:164px;top:110px" width="813" height="459" viewBox="0 0 813 459">
<defs><filter id="soft" x="-10%" y="-10%" width="120%" height="120%"><feGaussianBlur stdDeviation="3.5"/></filter></defs>
<g id="sl5">
<rect x="0" y="0" width="813" height="459" fill="#fff"/>
<rect x="15" y="16" width="782.5" height="427" fill="#d9d9d9"/>
<rect x="24.3" y="25.5" width="764" height="409" fill="none" stroke="#8a8a8a" stroke-width="1.2"/>
<text x="406.2" y="79.9" text-anchor="middle" font-family="Liberation Serif" font-size="32" fill="#333" textLength="578" lengthAdjust="spacingAndGlyphs">Кибернетический подход к описанию</text>
<text x="405.8" y="120.4" text-anchor="middle" font-family="Liberation Serif" font-size="32" fill="#333" textLength="236.6" lengthAdjust="spacingAndGlyphs">любой системы</text>
<rect x="124" y="153" width="576" height="265" fill="#fff" filter="url(#soft)"/>
<g fill="none" stroke="#1a1a1a">
<rect x="129.5" y="190" width="557" height="203" rx="101.5" ry="101.5" stroke-width="2.2" stroke-dasharray="23 10.5" stroke-dashoffset="-5"/>
</g>
<g fill="none" stroke="#2a2a2a" stroke-width="1.1">
<rect x="185.5" y="205.2" width="288.8" height="124.8"/>
<rect x="199" y="268" width="105.8" height="40.5"/>
<rect x="527.3" y="263.4" width="105.1" height="41.7"/>
<path d="M304.8,277.5 H344"/>
<path d="M355,298.2 H316"/>
<path d="M366.6,268 H443 A15,20.3 0 0 1 443,308.6 H366.6"/>
<ellipse cx="366.6" cy="288.3" rx="15" ry="20.3"/>
<path d="M466,286.4 H515"/>
<path d="M503.2,181 V274.4 H516"/>
<path d="M632.4,284 H654 V315.2 H511.2 V298.6 H467"/>
</g>
<g fill="#1a1a1a">
<path d="M354.3,277.5 L342.5,273.8 L342.5,281.2 Z"/>
<path d="M304.8,298.2 L316.6,294.5 L316.6,301.9 Z"/>
<path d="M527.3,286.4 L515.5,282.7 L515.5,290.1 Z"/>
<path d="M527.3,274.4 L515.5,270.7 L515.5,278.1 Z"/>
<path d="M456,298.6 L467.8,294.9 L467.8,302.3 Z"/>
</g>
<g font-family="Liberation Serif" font-size="14.2" fill="#383838">
<text x="426.5" y="173.6" textLength="130.8">Окружающая среда</text>
<text x="234.8" y="222" textLength="193.0">Учет, хранение, переработка,</text>
<text x="257.2" y="239.3" textLength="147.6">передача информации</text>
<text x="204.9" y="285.2" textLength="95.7">Управляющая</text>
<text x="226.5" y="302.7" textLength="51.1">система</text>
<text x="270.6" y="324.3" textLength="136.0">Система управления</text>
<text x="387" y="283.4" textLength="55.0">Система</text>
<text x="396" y="301" textLength="37.2">связи</text>
<text x="555.2" y="281" textLength="49.8">Объект</text>
<text x="541.5" y="297.3" textLength="78.3">управления</text>
<text x="349.2" y="411.7" textLength="154.1">Система с управлением</text>
<text x="505.6" y="219.5" textLength="25">{w}</text>
<text x="476" y="275.6" textLength="22.5">{x}</text>
<text x="483" y="314.6" textLength="22">{y}</text>
</g>
</g>
</svg>

<!-- STATUS -->
<svg class="a" style="left:0;top:0" width="1000" height="615" viewBox="0 0 1000 615" font-family="Liberation Sans" pointer-events="none">
<!-- right scrollbar -->
<rect x="986.5" y="86" width="12.5" height="510" fill="#eeeeee"/>
<rect x="987.4" y="86.8" width="11" height="11" fill="#fff" stroke="#bfbfbf" stroke-width="0.8"/>
<path d="M990.2,93.8 H995.5 L992.85,90.6 Z" fill="#2a2a2a"/>
<rect x="987.5" y="247.2" width="11" height="36.5" fill="#fff" stroke="#bfbfbf" stroke-width="0.8"/>
<rect x="987.4" y="544.8" width="11" height="11.4" fill="#fff" stroke="#bfbfbf" stroke-width="0.8"/>
<path d="M990.2,548.8 H995.5 L992.85,552 Z" fill="#2a2a2a"/>
<g fill="#4a4a4a">
<path d="M989.6,563 L993.1,558.3 L996.6,563 Z M989.6,566.5 L993.1,561.8 L996.6,566.5 Z"/>
<path d="M989.6,569.8 L993.1,574.5 L996.6,569.8 Z M989.6,573.6 L993.1,578.5 L996.6,573.6 Z"/>
</g>
<rect x="999" y="0" width="1" height="615" fill="#cfcfcf"/>
<!-- status bar -->
<rect x="0" y="595" width="1000" height="16" fill="#f3f3f3"/>
<rect x="0" y="594.4" width="1000" height="1" fill="#d9d9d9"/>
<rect x="752.3" y="596.3" width="26.8" height="14.7" fill="#c6c6c6"/>
<defs><linearGradient id="strip" x1="0" x2="1"><stop offset="0" stop-color="#d8ecb4"/><stop offset="0.2" stop-color="#dcefac"/><stop offset="0.42" stop-color="#eaf190"/><stop offset="0.7" stop-color="#eaee8e"/><stop offset="1" stop-color="#f0eaa6"/></linearGradient></defs>
<rect x="0" y="611" width="1000" height="4" fill="url(#strip)"/><rect x="0" y="610.6" width="1000" height="0.8" fill="#c9c9b0"/>
<rect x="0" y="86" width="1" height="525" fill="#d0d0d0"/>
<g font-size="7.7" fill="#444">
<text x="5.9" y="606.5" textLength="45.2" lengthAdjust="spacingAndGlyphs">Слайд 5 из 12</text>
<text x="85.2" y="606.5" textLength="26.1" lengthAdjust="spacingAndGlyphs">русский</text>
<text x="135.3" y="606.5" textLength="180.9" lengthAdjust="spacingAndGlyphs">Специальные возможности: проверьте рекомендации</text>
<text x="644" y="606.5" textLength="27.8" lengthAdjust="spacingAndGlyphs">Заметки</text>
<text x="697" y="606.5" textLength="42" lengthAdjust="spacingAndGlyphs">Примечания</text>
<text x="961" y="606.5" textLength="16.4" lengthAdjust="spacingAndGlyphs">92 %</text>
</g>
<!-- spell icon -->
<g fill="none" stroke="#6a6a6a" stroke-width="0.7">
<path d="M64.6,599.3 H68.8 V606.6 H64.6 Z M68.8,599.3 H73.2 V606.6 H68.8"/>
</g>
<path d="M70.2,601.3 L72.4,603.5 M72.4,601.3 L70.2,603.5" stroke="#333" stroke-width="0.8"/>
<!-- accessibility icon -->
<g fill="none" stroke="#555" stroke-width="0.8">
<path d="M126.5,598.8 L123.8,602 L126.8,605.8"/>
<path d="M126,601.5 L128.5,603.5 L131,603.5"/>
<path d="M128.3,604 L132.8,608.3 M132.8,604 L128.3,608.3"/>
</g>
<circle cx="130.2" cy="600.6" r="1.1" fill="#555"/>
<!-- notes icon -->
<path d="M633,606.5 H641 V603 H633 Z" fill="#bdbdbd"/>
<path d="M635,602.8 L637,600 L639,602.8 Z" fill="#888"/>
<!-- comments icon -->
<path d="M684.8,599.2 H695 V605.3 H688.5 L686.5,607.3 V605.3 H684.8 Z" fill="#555"/>
<!-- view icons -->
<g fill="none" stroke="#6f6f6f" stroke-width="0.8">
<rect x="761.5" y="599.5" width="8" height="7.5"/>
<rect x="763.5" y="601" width="4.5" height="3.5"/>
<rect x="789.3" y="599.5" width="3.8" height="3.2"/><rect x="794" y="599.5" width="3.8" height="3.2"/>
<rect x="789.3" y="603.6" width="3.8" height="3.2"/><rect x="794" y="603.6" width="3.8" height="3.2"/>
<rect x="816.8" y="599.5" width="4" height="7.2"/><rect x="821" y="599.5" width="4" height="7.2"/>
<path d="M844.8,599.8 H853.2 M845.5,599.8 V603.5 H852.5 V599.8 M849,603.5 V606.5 M847,607 H851"/>
</g>
<g stroke="#9a9a9a" stroke-width="0.8"><path d="M866.3,603 H869.7 M948.2,603 H951.8 M950,601.2 V604.8"/></g>
<rect x="875.3" y="602.6" width="68.8" height="0.9" fill="#444"/>
<rect x="905.5" y="599.6" width="3.8" height="7.6" fill="#444"/>
<g fill="none" stroke="#666" stroke-width="0.7"><rect x="988.5" y="599.5" width="6.5" height="6.5"/><path d="M989.5,600.5 L994,605 M994,600.5 L989.5,605"/></g>
</svg>

</body></html>
